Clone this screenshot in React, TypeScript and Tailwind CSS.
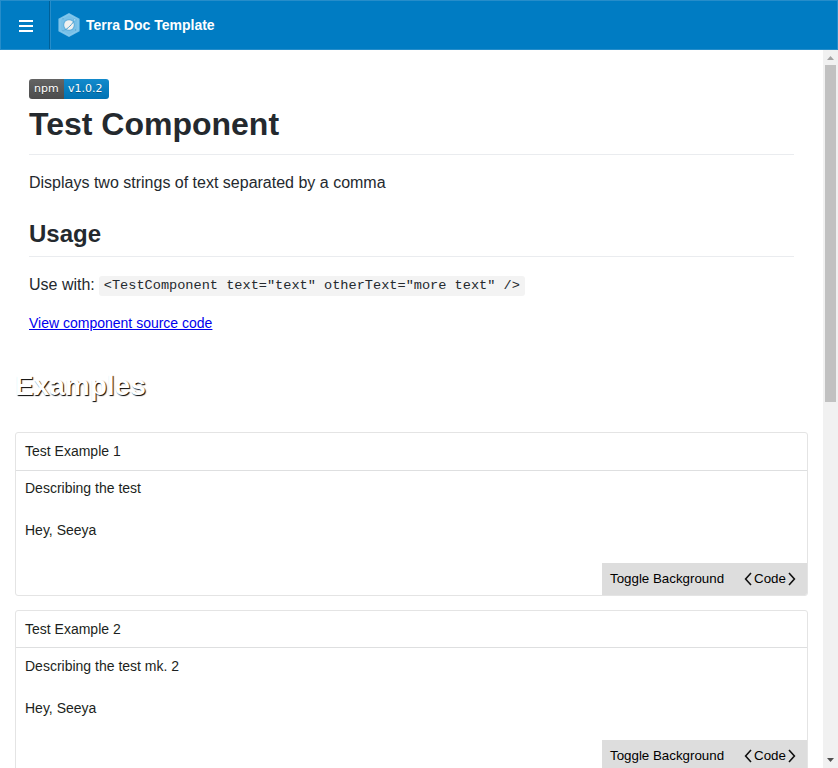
import React from 'react';

function Chevron({ right = false }: { right?: boolean }) {
  return (
    <svg width="8" height="14" viewBox="0 0 8 14" fill="none" stroke="#111" strokeWidth="1.6" className="block shrink-0">
      <path d={right ? 'M1 1L6.4 7L1 13' : 'M7 1L1.6 7L7 13'} />
    </svg>
  );
}

function Example({ title, description, tall }: { title: string; description: string; tall: boolean }) {
  return (
    <section className={`${tall ? 'h-[164px]' : 'h-[163px]'} mb-[14px] flex shrink-0 flex-col overflow-hidden rounded-[3px] border border-[#e4e4e4] text-[14px] leading-[20px] text-[#1c1f21]`}>
      <div className={`${tall ? 'h-[38px]' : 'h-[37px]'} shrink-0 border-b border-[#dedfe0] pt-[8px] pl-[9px]`}>
        {title}
      </div>
      <div className={`${tall ? 'pt-[7px]' : 'pt-[8px]'} pl-[9px]`}>
        <p>{description}</p>
        <p className="mt-[22px]">Hey, Seeya</p>
      </div>
      <div className="mt-auto ml-auto flex h-8 w-[205px] shrink-0 items-center bg-[#ddd] pl-2 text-[13.333px] leading-4 text-black">
        <button className="w-[134px] text-left">Toggle Background</button>
        <button className="flex items-center gap-[2px]">
          <Chevron />
          <span>Code</span>
          <Chevron right />
        </button>
      </div>
    </section>
  );
}

function Logo() {
  return (
    <svg width="22" height="24" viewBox="0 0 22 24" className="ml-[8px] block">
      <path d="M11 0L21.6 5.8V18.2L11 24L.4 18.2V5.8Z" fill="#78c0e8" />
      <path d="M11 1.5L20 6.5V17.5L11 22.5L2 17.5V6.5Z" fill="none" stroke="#8accee" strokeWidth=".8" />
      <circle cx="11" cy="12" r="6" fill="#62b0dd" />
      <circle cx="11" cy="12" r="4.8" fill="#f0f0ef" />
      <path d="M6.5 17C9 16.5 15 10.5 16.5 7" fill="none" stroke="#4ba1d1" strokeWidth="1" />
      <circle cx="16.7" cy="6.9" r="1.3" fill="#a4d9f5" stroke="#55a9d8" strokeWidth=".6" />
      <path d="M4.5 5.8h1M4.5 17.8h1M17 17h1" stroke="#509fcb" />
    </svg>
  );
}

export default function App() {
  return (
    <div className="flex h-[768px] w-[838px] flex-col overflow-hidden bg-white font-['Liberation_Sans',Arial,sans-serif] text-[#24292e]">
      <header className="flex h-[50px] shrink-0 items-center border border-[#268dca] bg-[#007cc3] text-white">
        <button className="flex h-full w-[49px] items-center justify-center border-r border-[#006098]" aria-label="Menu">
          <svg width="14" height="12" viewBox="0 0 14 12" className="mt-px ml-[2px]">
            <path d="M0 1h14M0 6h14M0 11h14" stroke="white" strokeWidth="2" />
          </svg>
        </button>
        <div className="flex h-full items-center border-l border-[#268dca]">
          <div className="-ml-px"><Logo /></div>
          <span className="ml-[6px] text-[14px] leading-5 font-bold">Terra Doc Template</span>
        </div>
      </header>
      <div className="flex h-[718px] min-h-0">
        <main className="flex w-[823px] shrink-0 flex-col overflow-hidden px-[15px]">
          <article className="mr-[14px] ml-[14px] shrink-0 pt-[29px]">
            <div className="flex h-5 w-20 overflow-hidden rounded-[3px] font-['DejaVu_Sans',Verdana,sans-serif] text-[11px] leading-5 text-white [text-shadow:0_1px_0_rgb(1_1_1/30%)]">
              <span className="w-[35px] bg-linear-to-b from-[#646464] to-[#4c4c4c] pl-[5px]">npm</span>
              <span className="w-[45px] bg-linear-to-b from-[#128acc] to-[#0072b3] pl-[4px]">v1.0.2</span>
            </div>
            <h1 className="h-[56px] border-b border-[#eaecef] pt-[5px] text-[32px] leading-10 font-bold">Test Component</h1>
            <p className="pt-4 text-[16px] leading-6">Displays two strings of text separated by a comma</p>
            <h2 className="mt-6 h-[38px] border-b border-[#eaecef] text-[24px] leading-[30px] font-bold">Usage</h2>
            <p className="mt-4 flex h-6 items-center text-[16px] leading-6">
              Use with:
              <code className="mt-[2px] ml-[4px] h-5 rounded-[3px] bg-[#f3f3f3] px-[5px] font-['Liberation_Mono',monospace] text-[13.6px] leading-5 whitespace-pre">{'<TestComponent text="text" otherText="more text" />'}</code>
            </p>
            <a href="#source" className="mt-4 block h-5 text-[14px] leading-5 text-[#0000ee] underline">View component source code</a>
          </article>
          <h2 className="mt-[37px] mb-[30px] h-8 shrink-0 text-[28px] leading-8 font-bold text-white [text-shadow:1px_1px_1px_#000]">Examples</h2>
          <Example title="Test Example 1" description="Describing the test" tall />
          <Example title="Test Example 2" description="Describing the test mk. 2" tall={false} />
        </main>
        <div className="flex w-[15px] flex-col items-center bg-[#f1f1f1]">
          <svg width="15" height="15" viewBox="0 0 15 15" className="shrink-0"><path d="M4 10L7.5 6L11 10Z" fill="#a3a3a3" /></svg>
          <div className="h-[337px] w-[11px] shrink-0 bg-[#c1c1c1]" />
          <svg width="15" height="15" viewBox="0 0 15 15" className="mt-auto shrink-0"><path d="M4 5L7.5 9L11 5Z" fill="#505050" /></svg>
        </div>
      </div>
    </div>
  );
}
